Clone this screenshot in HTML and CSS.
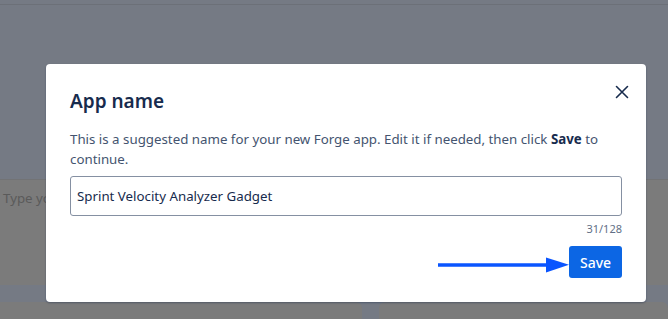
FILE: index.html
```html
<!DOCTYPE html>
<html lang="en">
<head>
<meta charset="utf-8">
<title>App name</title>
<link rel="stylesheet" href="styles.css">
</head>
<body>
<div class="page">
  <div class="topbar"></div>
  <div class="prompt-box"><span class="prompt-placeholder">Type your prompt here</span></div>
  <div class="cards">
    <div class="card"></div>
    <div class="card"></div>
  </div>
</div>

<div class="modal" role="dialog" aria-labelledby="modal-title">
  <div class="modal-header">
    <h1 id="modal-title" class="modal-title">App name</h1>
    <button class="close-btn" aria-label="Close">
      <svg width="14" height="14" viewBox="0 0 14 14"><path d="M1.5 1.5 L12.5 12.5 M12.5 1.5 L1.5 12.5" stroke="#172b4d" stroke-width="1.6" stroke-linecap="round"/></svg>
    </button>
  </div>
  <p class="modal-desc">This is a suggested name for your new Forge app. Edit it if needed, then click <strong>Save</strong> to continue.</p>
  <div class="field">
    <input class="text-input" type="text" value="Sprint Velocity Analyzer Gadget">
    <div class="counter">31/128</div>
  </div>
  <div class="modal-footer">
    <button class="save-btn">Save</button>
  </div>
  <svg class="arrow" width="134" height="18" viewBox="0 0 134 18"><line x1="0" y1="9" x2="112" y2="9" stroke="#0a55ff" stroke-width="3.5"/><polygon points="108,1.5 131,8.8 108,16.5" fill="#0a55ff"/></svg>
</div>
</body>
</html>
```
FILE: styles.css
```css
* { box-sizing: border-box; }
html, body { margin: 0; padding: 0; }
body {
  width: 668px;
  height: 319px;
  overflow: hidden;
  background: #757a84;
  font-family: "Noto Sans", "Open Sans", sans-serif;
  position: relative;
}
.page {
  display: flex;
  flex-direction: column;
  height: 100%;
}
.topbar {
  height: 5px;
  border-bottom: 1px solid #6c7078;
  flex: none;
}
.prompt-box {
  margin-top: 174px;
  height: 106px;
  background: #7b7b7b;
  border-top: 1px solid #727375;
  padding: 6px 3px;
  flex: none;
}
.prompt-placeholder {
  font-size: 13.3px;
  color: #5a5a5a;
  line-height: 20px;
}
.cards {
  margin-top: 17px;
  display: flex;
  gap: 17px;
  flex: 1;
}
.card {
  flex: 1;
  background: #7b7b7b;
  border-radius: 6px 6px 0 0;
}
.card:first-child { border-radius: 0 6px 0 0; flex: 0 0 362px; }

.modal {
  position: absolute;
  left: 46px;
  top: 64px;
  width: 600px;
  height: 238px;
  background: #fff;
  border-radius: 4px;
  box-shadow: 0 1px 2px rgba(9, 30, 66, 0.35);
  padding: 23px 24px 24px 24px;
  display: flex;
  flex-direction: column;
}
.modal-header {
  display: flex;
  justify-content: space-between;
  align-items: flex-start;
}
.modal-title {
  margin: 0;
  font-size: 19px;
  font-weight: 600;
  line-height: 28px;
  color: #172b4d;
}
.close-btn {
  border: none;
  background: none;
  padding: 0;
  width: 14px;
  height: 14px;
  margin-top: -2px;
  margin-right: -7px;
  cursor: pointer;
}
.close-btn svg { display: block; }
.modal-desc {
  margin: 14px 0 0;
  font-size: 13.3px;
  line-height: 20px;
  color: #44546f;
}
.modal-desc strong { color: #172b4d; font-weight: 700; }
.field {
  margin-top: 7px;
  display: flex;
  flex-direction: column;
}
.text-input {
  width: 100%;
  height: 40px;
  border: 1px solid #8590a2;
  border-radius: 3px;
  padding: 0 6px;
  font-family: inherit;
  font-size: 13.3px;
  color: #172b4d;
  outline: none;
}
.counter {
  align-self: flex-end;
  margin-top: 6px;
  font-size: 11px;
  line-height: 14px;
  color: #626f86;
}
.modal-footer {
  margin-top: 10px;
  display: flex;
  justify-content: flex-end;
}
.save-btn {
  height: 32px;
  width: 53px;
  padding: 0;
  border: none;
  border-radius: 3px;
  background: #0c66e4;
  color: #fff;
  font-family: inherit;
  font-size: 14px;
  font-weight: 500;
}
.arrow {
  position: absolute;
  left: 392px;
  top: 192px;
}
```
